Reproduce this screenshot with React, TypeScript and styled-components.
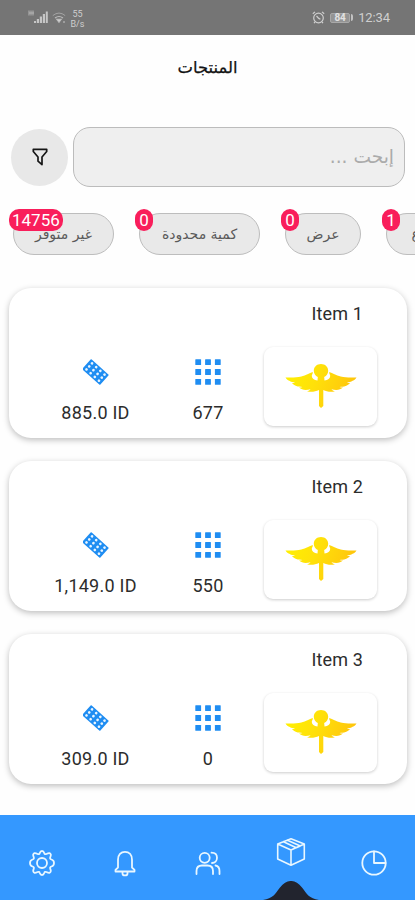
import React from "react";
import styled, { createGlobalStyle } from "styled-components";

const GlobalStyle = createGlobalStyle`
  *, *::before, *::after { box-sizing: border-box; }
  body { margin: 0; background: #fff; overflow: hidden; font-family: Roboto, "DejaVu Sans", sans-serif; }
`;

const Screen = styled.div`
  width: 415px;
  height: 900px;
  display: flex;
  flex-direction: column;
  overflow: hidden;
  background: #fefefe;
`;

const StatusBar = styled.header`
  flex: none;
  height: 35px;
  padding: 0 25px 0 28px;
  display: flex;
  align-items: center;
  justify-content: space-between;
  background: #757575;
  color: #cfcfcf;
`;

const StatusGroup = styled.div<{ $gap: number }>`
  display: flex;
  align-items: center;
  gap: ${(p) => p.$gap}px;
`;

const Speed = styled.div`
  display: flex;
  flex-direction: column;
  align-items: center;
  font-size: 9px;
  line-height: 10px;
  margin-top: 2px;
  width: 15px;
`;

const Clock = styled.span`
  font-size: 13px;
  line-height: 16px;
  letter-spacing: -0.1px;
`;

const Title = styled.h1`
  flex: none;
  margin: 0;
  height: 92px;
  padding-top: 22px;
  text-align: center;
  font: 400 16.4px/22px "DejaVu Sans", sans-serif;
  -webkit-text-stroke: 0.25px #111;
  color: #111;
`;

const SearchRow = styled.div`
  flex: none;
  display: flex;
  align-items: center;
  gap: 5px;
  padding: 0 10px 0 11px;
  height: 60px;
`;

const FilterButton = styled.button`
  flex: none;
  width: 57px;
  height: 57px;
  border: 0;
  border-radius: 50%;
  padding: 0;
  display: grid;
  place-items: center;
  background: #e8e8e8;
`;

const SearchField = styled.div`
  flex: 1;
  height: 60px;
  border: 1px solid #bcbcbc;
  border-radius: 17px;
  background: #efefef;
  display: flex;
  align-items: center;
  padding: 0 10px;
  color: #ababab;
  font: 18.6px/24px "DejaVu Sans", sans-serif;
`;

const Chips = styled.div`
  flex: none;
  display: flex;
  gap: 25px;
  padding: 26px 0 0 13px;
  height: 101px;
  overflow: hidden;
`;

const Chip = styled.div<{ $width: number }>`
  position: relative;
  flex: none;
  width: ${(p) => p.$width}px;
  height: 42px;
  border: 1px solid #bdbdbd;
  border-radius: 21px;
  background: #e9e9e9;
  display: flex;
  align-items: center;
  justify-content: center;
  font: 14px/20px "DejaVu Sans", sans-serif;
  color: #5a5a5a;
`;

const Badge = styled.span`
  position: absolute;
  top: -5px;
  left: -5px;
  height: 22px;
  min-width: 18px;
  padding: 0 3px;
  border-radius: 10px;
  background: #f91e5b;
  color: #fff;
  font: 17px/23px Roboto, sans-serif;
  text-align: center;
`;

const List = styled.main`
  flex: 1;
  display: flex;
  flex-direction: column;
  gap: 23px;
  padding: 0 8px 0 9px;
`;

const Card = styled.article`
  height: 150px;
  border-radius: 22px;
  background: #fff;
  box-shadow: 0 2px 6px rgba(0, 0, 0, 0.26);
  display: grid;
  grid-template-columns: 30px 113px 112px 113px;
  grid-template-rows: 59px 79px;
`;

const ItemName = styled.h2`
  grid-column: 4;
  margin: 0;
  padding: 14px 14px 0 0;
  text-align: right;
  font-size: 18px;
  letter-spacing: 0.15px;
  line-height: 23px;
  font-weight: 400;
  color: #2c2c2c;
`;

const Stat = styled.div<{ $column: number }>`
  grid-column: ${(p) => p.$column};
  grid-row: 2;
  display: flex;
  flex-direction: column;
  align-items: center;
  padding-top: 12px;
`;

const StatValue = styled.span`
  margin-top: 16px;
  font-size: 18px;
  letter-spacing: 0.25px;
  line-height: 24px;
  white-space: nowrap;
  color: #2c2c2c;
`;

const Thumb = styled.div`
  grid-column: 4;
  grid-row: 2;
  border-radius: 9px;
  background: #fff;
  box-shadow: 0 1px 3px rgba(0, 0, 0, 0.2);
  display: flex;
  justify-content: center;
  padding-top: 17px;
`;

const Nav = styled.nav`
  flex: none;
  height: 85px;
  display: grid;
  grid-template-columns: repeat(5, 1fr);
  background: #3498ff;
  color: #e9f7ff;
`;

const NavItem = styled.button<{ $active?: boolean }>`
  border: 0;
  padding: ${(p) => (p.$active ? 22 : 35)}px 0 0;
  background: none;
  color: inherit;
  display: flex;
  flex-direction: column;
  align-items: center;
  justify-content: space-between;
`;

const SignalIcon = () => (
  <svg width="20" height="15" viewBox="0 0 20 15" fill="#c6c6c6">
    <path d="M1 .5v5M3 .5v5M5 .5v5M1 3h5" stroke="#b5b5b5" strokeWidth="1" />
    <path d="M6 11h2v2H6zM8.800 9h2.200v4H8.800zM11.800 6.500H14V13h-2.200zM14.800 4H17v9h-2.200zM17.800 1.500h2V13h-2z" />
  </svg>
);

const WifiIcon = () => (
  <svg width="14" height="12" viewBox="0 0 14 12" fill="none" stroke="#bdbdbd">
    <path d="M.8 3.600Q7-1.500 13.200 3.600" opacity=".65" />
    <path d="M3 6q4-3 8 0" strokeWidth="1.200" />
    <path d="m4.800 7.300 2.200 3 2.200-3zM12 9v2" fill="#d5d5d5" strokeWidth="1.100" />
  </svg>
);

const AlarmIcon = () => (
  <svg width="13" height="13" viewBox="0 0 13 13" fill="none" stroke="#cfcfcf" strokeWidth="1.200">
    <circle cx="6.500" cy="7" r="4.800" />
    <path d="M.8 2.800 3 .9M12.200 2.800 10 .9M4.500 5l2.300 2.400 1.600.8M3 11l-1 1.200M10 11l1 1.200" />
  </svg>
);

const BatteryShell = styled.span`
  height: 10px;
  width: 20px;
  border: 1px solid #a9a9a9;
  border-radius: 2px;
  background: #949494;
  color: #e2e2e2;
  font: 700 10px/8px Roboto, sans-serif;
  text-align: center;
`;

const BatteryTip = styled.span`
  width: 2px;
  height: 7px;
  border-radius: 0 2px 2px 0;
  background: #c2c2c2;
`;

const FunnelIcon = () => (
  <svg width="16" height="18" viewBox="0 0 16 18" fill="none" stroke="#161616" strokeWidth="1.700" strokeLinejoin="round">
    <path d="M1.300 1.300h13.400v2.200L10 9v7.600L6 13.200V9L1.300 3.500z" />
  </svg>
);

const STRIP_DOTS = [0, 1, 2, 3].flatMap((x) => [0, 1, 2].map((y) => [x, y]));

const StripIcon = () => (
  <svg width="26" height="26" viewBox="0 0 26 26">
    <g transform="translate(12.500 13) rotate(42)">
      <rect x="-12" y="-6.800" width="24" height="13.600" rx=".8" fill="#1f8df2" />
      {STRIP_DOTS.map(([x, y]) => (
        <circle key={`${x}-${y}`} cx={-8.4 + x * 5.6} cy={-4.1 + y * 4.1} r="1.350" fill="#e9f5ff" />
      ))}
    </g>
  </svg>
);

const GRID = [0, 1, 2];

const GridIcon = () => (
  <svg width="26" height="26" viewBox="0 0 26 26" fill="#1f8df2">
    {GRID.flatMap((x) =>
      GRID.map((y) => <rect key={`${x}-${y}`} x={0.3 + x * 9.8} y={0.3 + y * 9.8} width="5.800" height="5.800" rx=".5" />)
    )}
  </svg>
);

const WingedStaff = ({ id }: { id: string }) => (
  <svg width="72" height="44" viewBox="0 0 72 44">
    <defs>
      <linearGradient id={id} x1="0" y1="0" x2="1" y2="0.250">
        <stop offset="0" stopColor="#fff200" />
        <stop offset=".5" stopColor="#ffe00a" />
        <stop offset="1" stopColor="#ffc60c" />
      </linearGradient>
    </defs>
    <g fill={`url(#${id})`}>
      <path d="M36 0c4.200 0 7.200 2.900 7.200 6.800 0 3-1.600 5-4 6.200l.3 3.500c3.600-.3 5.500-2.200 5.700-4.500.1-1.400-1.200-1.800-1-4 3.500 1 6.800 3.300 11.500 4.500 5 1.300 9.800 1.100 15.800 1-1.500 3-5.500 4.200-9.500 5.200 1 .3 2 .3 3 .2-2.200 3-6 3.700-10.500 4 1 .5 2 .7 3.500.7-3 2.700-7 2.900-11.500 1.700.8 1 1.800 1.600 3.500 2-4.500 1.200-8.500.1-11.700-1.300V42L36 44l-2-2V26c-3.500 1.400-7.500 2.500-12 1.300 1.700-.4 2.700-1 3.500-2-4.500 1.200-8.500 1-11.500-1.700 1.500 0 2.500-.2 3.500-.7-4.500-.3-8.300-1-10.500-4 1 .1 2 .1 3-.2-4-1-8-2.200-9.500-5.200 6 .1 10.800.3 15.800-1 4.700-1.200 8-3.500 11.500-4.500.2 2.200-1.100 2.600-1 4 .2 2.300 2.100 4.200 5.700 4.500l.3-3.500c-2.400-1.200-4-3.200-4-6.200C28.800 2.900 31.800 0 36 0z" />
    </g>
  </svg>
);

const line = { fill: "none", stroke: "currentColor", strokeWidth: 1.8, strokeLinejoin: "round", strokeLinecap: "round" } as const;

const GearIcon = () => (
  <svg width="26" height="26" viewBox="0 0 26 26" {...line}>
    <circle cx="13" cy="13" r="5" />
    <path d="M10.800 3q.6-2 2.200-2t2.200 2q.4 1.700 2.200 1 4-2 4.400.8.200.9-.5 2.200-.8 1.800 1.200 2.500 2.500.8 2.500 3.500t-2.500 3.500q-2 .7-1.200 2.500.7 1.300.5 2.200-.4 2.800-4.400.8-1.800-.7-2.200 1-.6 2-2.200 2t-2.200-2q-.4-1.700-2.200-1-4 2-4.400-.8-.2-.9.500-2.200.8-1.800-1.200-2.500Q1 15.700 1 13t2.500-3.500q2-.7 1.200-2.500-.7-1.300-.5-2.200Q4.600 2 8.600 4q1.800.7 2.200-1z" />
  </svg>
);

const BellIcon = () => (
  <svg width="24" height="27" viewBox="0 0 24 27" {...line}>
    <path d="M2.500 21.500v-1.700L5 17.500V9.700C5 4.900 7.900 1.800 12 1.800s7 3.100 7 7.900v7.800l2.500 2.300v1.700zM9.500 22v1.400q0 2 2.500 2t2.500-2V22" />
  </svg>
);

const UsersIcon = () => (
  <svg width="26" height="26" viewBox="0 0 26 26" {...line}>
    <circle cx="9.700" cy="7.800" r="5" />
    <path d="M1.500 24v-3c0-4 2-5.500 5.500-5.500h5.500c3.500 0 5.500 1.500 5.500 5.500v3M16.500 2.700c3.300 0 5.500 2 5.500 5.100s-2.200 5.200-5 5.200M20.500 15.500c2.700.5 4 2.500 4 5.500v3" />
  </svg>
);

const BoxIcon = () => (
  <svg width="30" height="30" viewBox="0 0 30 30" {...line} strokeWidth={1.6}>
    <path d="M15 1.800 28.300 7v15L15 28.200 1.700 22V7zM1.700 7 15 13l13.300-6M15 13v15M7.500 4.700l12.800 6 4-1.800-12.800-5.700" />
  </svg>
);

const PieIcon = () => (
  <svg width="26" height="26" viewBox="0 0 26 26" {...line}>
    <circle cx="13" cy="13" r="11.700" />
    <path d="M13 1.500V13h11.500" />
  </svg>
);

const NotchIcon = () => (
  <svg width="56" height="19" viewBox="0 0 56 19" fill="#22242e">
    <path d="M0 19c10-1.500 12-6 17-12.500 7-8.700 15-8.700 22 0C44 13 46 17.500 56 19z" />
  </svg>
);

const chips = [
  { label: "غير متوفر", count: 14756, width: 101 },
  { label: "كمية محدودة", count: 0, width: 121 },
  { label: "عرض", count: 0, width: 76 },
  { label: "الأنواع", count: 1, width: 86 },
];

const items = [
  { name: "Item 1", price: "885.0 ID", stock: 677 },
  { name: "Item 2", price: "1,149.0 ID", stock: 550 },
  { name: "Item 3", price: "309.0 ID", stock: 0 },
];

export default function App() {
  return (
    <>
      <GlobalStyle />
      <Screen>
        <StatusBar>
          <StatusGroup $gap={4}>
            <SignalIcon />
            <WifiIcon />
            <Speed>
              <span>55</span>
              <span>B/s</span>
            </Speed>
          </StatusGroup>
          <StatusGroup $gap={5}>
            <AlarmIcon />
            <StatusGroup $gap={1}>
              <BatteryShell>84</BatteryShell>
              <BatteryTip />
            </StatusGroup>
            <Clock>12:34</Clock>
          </StatusGroup>
        </StatusBar>
        <Title dir="rtl">المنتجات</Title>
        <SearchRow>
          <FilterButton aria-label="تصفية">
            <FunnelIcon />
          </FilterButton>
          <SearchField dir="rtl">إبحت ...</SearchField>
        </SearchRow>
        <Chips>
          {chips.map((chip) => (
            <Chip key={chip.label} $width={chip.width}>
              <span dir="rtl">{chip.label}</span>
              <Badge>{chip.count}</Badge>
            </Chip>
          ))}
        </Chips>
        <List>
          {items.map((item, i) => (
            <Card key={item.name}>
              <ItemName>{item.name}</ItemName>
              <Stat $column={2}>
                <StripIcon />
                <StatValue>{item.price}</StatValue>
              </Stat>
              <Stat $column={3}>
                <GridIcon />
                <StatValue>{item.stock}</StatValue>
              </Stat>
              <Thumb>
                <WingedStaff id={`gold-${i}`} />
              </Thumb>
            </Card>
          ))}
        </List>
        <Nav>
          <NavItem><GearIcon /></NavItem>
          <NavItem><BellIcon /></NavItem>
          <NavItem><UsersIcon /></NavItem>
          <NavItem $active>
            <BoxIcon />
            <NotchIcon />
          </NavItem>
          <NavItem><PieIcon /></NavItem>
        </Nav>
      </Screen>
    </>
  );
}
